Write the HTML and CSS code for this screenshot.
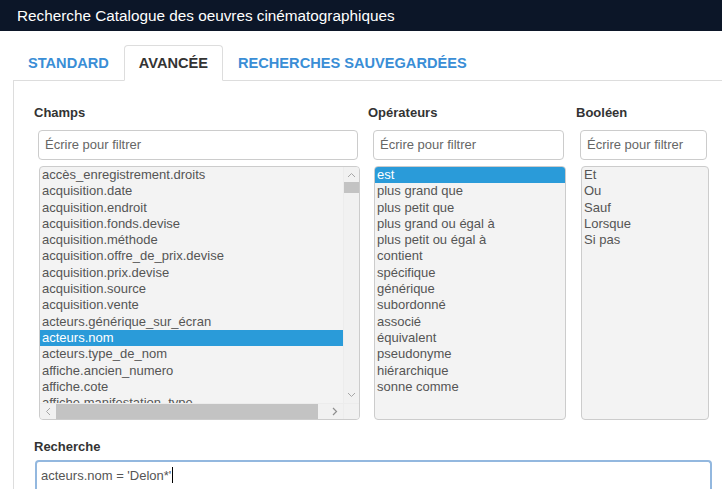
FILE: index.html
```html
<!DOCTYPE html>
<html lang="fr">
<head>
<meta charset="utf-8">
<title>Recherche Catalogue des oeuvres cinématographiques</title>
<link rel="stylesheet" href="styles.css">
</head>
<body>
<header class="topbar">Recherche Catalogue des oeuvres cinématographiques</header>
<div class="tabs-wrap">
  <ul class="tabs">
    <li class="tab">STANDARD</li>
    <li class="tab active">AVANCÉE</li>
    <li class="tab">RECHERCHES SAUVEGARDÉES</li>
  </ul>
  <div class="pane">
    <div class="cols">
      <div class="col c1">
        <div class="label">Champs</div>
        <div class="stack">
          <div class="filter">Écrire pour filtrer</div>
          <div class="listbox scroll">
            <div class="items">
              <div class="item">accès_enregistrement.droits</div>
              <div class="item">acquisition.date</div>
              <div class="item">acquisition.endroit</div>
              <div class="item">acquisition.fonds.devise</div>
              <div class="item">acquisition.méthode</div>
              <div class="item">acquisition.offre_de_prix.devise</div>
              <div class="item">acquisition.prix.devise</div>
              <div class="item">acquisition.source</div>
              <div class="item">acquisition.vente</div>
              <div class="item">acteurs.générique_sur_écran</div>
              <div class="item sel">acteurs.nom</div>
              <div class="item">acteurs.type_de_nom</div>
              <div class="item">affiche.ancien_numero</div>
              <div class="item">affiche.cote</div>
              <div class="item">affiche.manifestation_type</div>
            </div>
            <div class="vbar">
              <div class="btn"><svg width="9" height="6" viewBox="0 0 9 6"><path d="M1 5 L4.5 1.5 L8 5" fill="none" stroke="#a6a6a6" stroke-width="1"/></svg></div>
              <div class="vthumb"></div>
              <div class="vtrack"></div>
              <div class="btn"><svg width="9" height="6" viewBox="0 0 9 6"><path d="M1 1 L4.5 4.5 L8 1" fill="none" stroke="#a6a6a6" stroke-width="1"/></svg></div>
            </div>
            <div class="hbar">
              <div class="btn"><svg width="6" height="9" viewBox="0 0 6 9"><path d="M5 1 L1.5 4.5 L5 8" fill="none" stroke="#a6a6a6" stroke-width="1"/></svg></div>
              <div class="hthumb"></div>
              <div class="htrack"></div>
              <div class="btn"><svg width="6" height="9" viewBox="0 0 6 9"><path d="M1 1 L4.5 4.5 L1 8" fill="none" stroke="#8f8f8f" stroke-width="1.2"/></svg></div>
            </div>
            <div class="corner"></div>
          </div>
        </div>
      </div>
      <div class="col c2">
        <div class="label">Opérateurs</div>
        <div class="stack">
          <div class="filter">Écrire pour filtrer</div>
          <div class="listbox">
            <div class="items">
              <div class="item sel">est</div>
              <div class="item">plus grand que</div>
              <div class="item">plus petit que</div>
              <div class="item">plus grand ou égal à</div>
              <div class="item">plus petit ou égal à</div>
              <div class="item">contient</div>
              <div class="item">spécifique</div>
              <div class="item">générique</div>
              <div class="item">subordonné</div>
              <div class="item">associé</div>
              <div class="item">équivalent</div>
              <div class="item">pseudonyme</div>
              <div class="item">hiérarchique</div>
              <div class="item">sonne comme</div>
            </div>
          </div>
        </div>
      </div>
      <div class="col c3">
        <div class="label">Booléen</div>
        <div class="stack">
          <div class="filter">Écrire pour filtrer</div>
          <div class="listbox">
            <div class="items">
              <div class="item">Et</div>
              <div class="item">Ou</div>
              <div class="item">Sauf</div>
              <div class="item">Lorsque</div>
              <div class="item">Si pas</div>
            </div>
          </div>
        </div>
      </div>
    </div>
    <div class="label search-label">Recherche</div>
    <div class="query">acteurs.nom = 'Delon*'<span class="caret"></span></div>
  </div>
</div>
</body>
</html>
```
FILE: styles.css
```css
* { box-sizing: border-box; }
html, body { margin: 0; padding: 0; background: #fff; overflow: hidden; }
body {
  font-family: "Liberation Sans", Arial, sans-serif;
  color: #333;
  width: 722px;
  height: 489px;
}
.topbar {
  height: 31px;
  background: #0c1628;
  color: #fff;
  font-size: 15.3px;
  line-height: 31px;
  padding-left: 17px;
}
.tabs-wrap {
  margin: 14px 0 0 13px;
}
.tabs {
  list-style: none;
  margin: 0;
  padding: 0;
  display: flex;
  border-bottom: 1px solid #dddddd;
}
.tab {
  margin-bottom: -1px;
  height: 36px;
  padding: 0 14px;
  border: 1px solid transparent;
  border-radius: 4px 4px 0 0;
  font-size: 14.6px;
  font-weight: bold;
  line-height: 34px;
  color: #3a8ed6;
  white-space: nowrap;
}
.tab.active {
  color: #333;
  background: #fff;
  border-color: #dddddd;
  border-bottom-color: #fff;
}
.pane {
  border-left: 1px solid #dddddd;
  padding: 24px 0 0 20px;
}
.cols {
  display: grid;
  grid-template-columns: 326px 200px 134px;
  column-gap: 8px;
}
.label {
  font-size: 13px;
  font-weight: bold;
  line-height: 16px;
  color: #333;
}
.stack {
  display: flex;
  flex-direction: column;
  margin-top: 9px;
}
.c1 .stack { padding: 0 0 0 4px; width: 326px; }
.c2 .stack { padding: 0 2px 0 5px; }
.c3 .stack { padding: 0 1px 0 4px; }
.filter {
  height: 30px;
  border: 1px solid #cccccc;
  border-radius: 4px;
  background: #fff;
  font-size: 13px;
  line-height: 28px;
  padding-left: 6px;
  color: #666;
  width: calc(100% - 2px);
}
.listbox {
  margin-top: 6px;
  margin-left: 1px;
  height: 254px;
  border: 1px solid #cccccc;
  border-radius: 4px;
  background: #f3f3f3;
  overflow: hidden;
  width: calc(100% - 1px);
}
.listbox.scroll {
  display: grid;
  grid-template-columns: 1fr 16px;
  grid-template-rows: 1fr 16px;
}
.items {
  overflow: hidden;
  font-size: 13px;
  color: #555;
}
.item {
  height: 16.3px;
  line-height: 16px;
  padding-left: 2px;
  white-space: nowrap;
}
.item.sel {
  background: #2a9bd9;
  color: #fff;
}
.vbar {
  display: flex;
  flex-direction: column;
  background: #f1f1f1;
  border-left: 1px solid #ececec;
}
.btn {
  height: 16px;
  flex: 0 0 16px;
  display: flex;
  align-items: center;
  justify-content: center;
}
.vthumb {
  height: 11px;
  margin-top: -1px;
  background: #c3c3c3;
}
.vtrack { flex: 1; }
.hbar {
  display: flex;
  background: #f1f1f1;
  border-top: 1px solid #ececec;
}
.hbar .btn { width: 16px; height: auto; }
.hthumb {
  width: 262px;
  background: #c3c3c3;
}
.htrack { flex: 1; }
.corner { background: #f1f1f1; border-left: 1px solid #ececec; border-top: 1px solid #ececec; }
.search-label {
  margin-top: 19px;
}
.query {
  margin: 5px 0 0 1px;
  width: 677px;
  height: 40px;
  border: 2px solid #93b8df;
  border-bottom: none;
  border-radius: 4px 4px 0 0;
  font-size: 13px;
  line-height: 16px;
  color: #555;
  padding: 5px 4px 0;
}
.caret {
  display: inline-block;
  width: 0;
  height: 16px;
  border-left: 1.5px solid #000;
  vertical-align: -3px;
  margin-left: 1px;
}
```
